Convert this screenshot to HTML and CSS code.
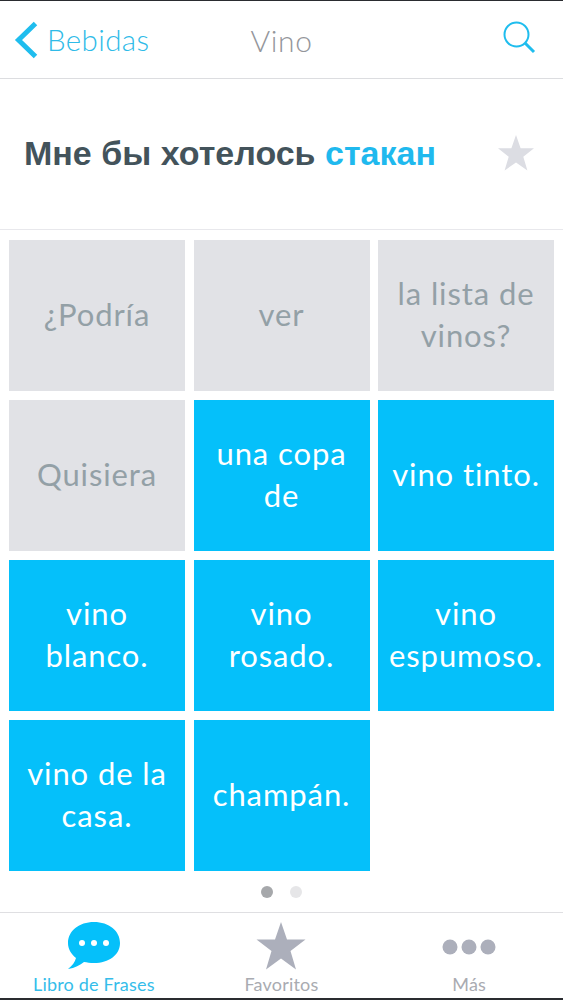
FILE: index.html
```html
<!DOCTYPE html>
<html lang="es">
<head>
  <meta charset="UTF-8">
  <meta name="viewport" content="width=device-width, initial-scale=1.0">
  <title>Vino</title>
  <link rel="stylesheet" href="styles.css">
</head>
<body>
  <div class="screen">
    <nav class="navbar">
      <a class="back" href="#">
        <svg class="back-icon" width="24" height="38" viewBox="0 0 24 38"><path d="M21.500 2.500 L4.500 19 L21.500 35.500" fill="none" stroke="#1fbdee" stroke-width="5"/></svg>
        <span>Bebidas</span>
      </a>
      <div class="nav-title">Vino</div>
      <svg class="search" width="34" height="34" viewBox="0 0 34 34"><circle cx="14.5" cy="14.5" r="12" fill="none" stroke="#1fbdee" stroke-width="2"/><path d="M23 23 L32 32" fill="none" stroke="#1fbdee" stroke-width="3"/></svg>
    </nav>

    <div class="phrase">
      <p class="phrase-text">Мне бы хотелось <span class="hl">стакан</span></p>
      <svg class="phrase-star" width="38" height="38" viewBox="0 0 38 38"><path d="M19 1 L23.6 14.3 L37 14.3 L26.3 22.7 L30.4 36.5 L19 28.4 L7.6 36.5 L11.7 22.7 L1 14.3 L14.4 14.3 Z" fill="#dcdde3"/></svg>
    </div>

    <div class="grid">
      <div class="tile off">¿Podría</div>
      <div class="tile off">ver</div>
      <div class="tile off">la lista de vinos?</div>
      <div class="tile off">Quisiera</div>
      <div class="tile">una copa de</div>
      <div class="tile">vino tinto.</div>
      <div class="tile">vino blanco.</div>
      <div class="tile">vino rosado.</div>
      <div class="tile">vino espumoso.</div>
      <div class="tile">vino de la casa.</div>
      <div class="tile">champán.</div>
    </div>

    <div class="dots">
      <span class="dot active"></span>
      <span class="dot"></span>
    </div>

    <div class="tabbar">
      <div class="tab current">
        <svg width="54" height="48" viewBox="0 0 54 48"><path d="M27 0 C42 0 53 9 53 21 C53 33 42 41 27 41 C23 41 20 40.500 17 40 C13 43 8 46 1 47 C5 44 8 40 9 36 C4 32 1 27 1 21 C1 9 12 0 27 0 Z" fill="#05c0fa"/><circle cx="15" cy="21" r="3" fill="#fff"/><circle cx="27" cy="21" r="3" fill="#fff"/><circle cx="39" cy="21" r="3" fill="#fff"/></svg>
        <span>Libro de Frases</span>
      </div>
      <div class="tab">
        <svg width="50" height="48" viewBox="0 0 50 48"><path d="M25 0 L31 17.500 L49.500 17.500 L34.500 29 L40 47.500 L25 36.500 L10 47.500 L15.500 29 L0.500 17.500 L19 17.500 Z" fill="#acafbb"/></svg>
        <span>Favoritos</span>
      </div>
      <div class="tab">
        <svg width="54" height="48" viewBox="0 0 54 48"><circle cx="8" cy="25" r="7.500" fill="#acafbb"/><circle cx="27" cy="25" r="7.500" fill="#acafbb"/><circle cx="46" cy="25" r="7.500" fill="#acafbb"/></svg>
        <span>Más</span>
      </div>
    </div>
  </div>
</body>
</html>
```

FILE: styles.css
```css
body {
  margin: 0;
  background: #fff;
  font-family: Lato, "Open Sans", sans-serif;
}

.screen {
  width: 563px;
  height: 1000px;
  box-sizing: border-box;
  border-top: 1px solid #2a2c30;
  border-bottom: 2px solid #2a2c30;
  display: flex;
  flex-direction: column;
  overflow: hidden;
}

.navbar {
  height: 77px;
  flex: none;
  border-bottom: 1px solid #dcdde0;
  display: grid;
  grid-template-columns: minmax(0, 1fr) auto minmax(0, 1fr);
  align-items: center;
  padding: 0 14px;
}

.back {
  display: flex;
  align-items: center;
  gap: 9px;
  text-decoration: none;
  color: #2fbbe8;
  font-size: 29.5px;
  font-weight: 300;
  letter-spacing: 0.4px;
}

.nav-title {
  font-size: 30px;
  font-weight: 300;
  color: #94969b;
  letter-spacing: 0.6px;
}

.search {
  justify-self: end;
  margin: 0 13px 6px 0;
}

.phrase {
  height: 151px;
  flex: none;
  box-sizing: border-box;
  border-bottom: 1px solid #e8e8ec;
  display: flex;
  align-items: center;
  justify-content: space-between;
  padding: 0 28px 2px 24px;
}

.phrase-text {
  margin: 0;
  font-family: "Liberation Sans", Arial, sans-serif;
  font-weight: 700;
  font-size: 34px;
  color: #43535b;
}

.hl {
  color: #1fb9ee;
}

.grid {
  margin-top: 10px;
  padding: 0 9px;
  display: grid;
  grid-template-columns: repeat(3, 176px);
  grid-auto-rows: 151px;
  gap: 9px 8.5px;
  flex: none;
}

.tile {
  display: flex;
  align-items: center;
  justify-content: center;
  text-align: center;
  padding: 0 6px 4px;
  background: #05c0fa;
  color: #fff;
  font-size: 31px;
  line-height: 42px;
  letter-spacing: 0.9px;
}

.tile.off {
  background: #e1e2e6;
  color: #93a0a6;
}

.dots {
  flex: none;
  display: flex;
  justify-content: center;
  gap: 17px;
  margin-top: 15px;
  height: 12px;
}

.dot {
  width: 12px;
  height: 12px;
  border-radius: 50%;
  background: #e6e6e8;
}

.dot.active {
  background: #a6a8ab;
}

.tabbar {
  margin-top: auto;
  height: 86px;
  box-sizing: border-box;
  border-top: 1px solid #dfdfe2;
  display: grid;
  grid-template-columns: repeat(3, 1fr);
  flex: none;
}

.tab {
  display: flex;
  flex-direction: column;
  align-items: center;
  padding-top: 9px;
  font-size: 18px;
  color: #a9abb1;
  letter-spacing: 0.2px;
}

.tab span {
  margin-top: 4px;
  line-height: 20px;
}

.tab.current {
  color: #35bdea;
}
```
